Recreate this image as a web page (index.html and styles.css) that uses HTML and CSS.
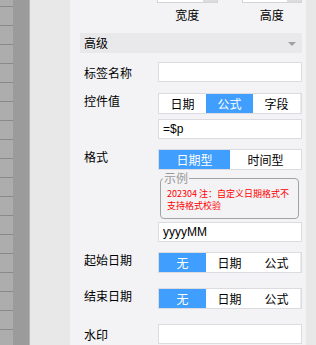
FILE: index.html
```html
<!DOCTYPE html>
<html lang="zh">

<head>
    <meta charset="UTF-8">
    <meta name="viewport" content="width=device-width, initial-scale=1.0">
    <title>属性面板</title>
    <link rel="stylesheet" href="styles.css">
</head>

<body>
    <div class="app">
        <div class="ruler"></div>
        <div class="gutter"></div>
        <div class="canvas"></div>

        <div class="panel">
            <div class="size-row">
                <div class="size-field">
                    <div class="num-box"><span class="spin"></span></div>
                    <span class="size-label">宽度</span>
                </div>
                <div class="size-field">
                    <div class="num-box"><span class="spin"></span></div>
                    <span class="size-label">高度</span>
                </div>
            </div>

            <div class="section-title">高级<i class="caret"></i></div>

            <div class="row">
                <label>标签名称</label>
                <div class="ctrl"><input class="text-input" type="text"></div>
            </div>

            <div class="row row-seg">
                <label>控件值</label>
                <div class="ctrl">
                    <div class="seg">
                        <button>日期</button>
                        <button class="active">公式</button>
                        <button>字段</button>
                    </div>
                    <input class="text-input mt5" type="text" value="=$p">
                </div>
            </div>

            <div class="row row-seg">
                <label>格式</label>
                <div class="ctrl">
                    <div class="seg seg-two">
                        <button class="active">日期型</button>
                        <button>时间型</button>
                    </div>
                    <fieldset class="sample">
                        <legend>示例</legend>
                        <p>202304 注：自定义日期格式不支持格式校验</p>
                    </fieldset>
                    <input class="text-input mt3" type="text" value="yyyyMM">
                </div>
            </div>

            <div class="row row-seg">
                <label>起始日期</label>
                <div class="ctrl">
                    <div class="seg">
                        <button class="active">无</button>
                        <button>日期</button>
                        <button>公式</button>
                    </div>
                </div>
            </div>

            <div class="row row-seg gap15">
                <label>结束日期</label>
                <div class="ctrl">
                    <div class="seg">
                        <button class="active">无</button>
                        <button>日期</button>
                        <button>公式</button>
                    </div>
                </div>
            </div>

            <div class="row gap15">
                <label>水印</label>
                <div class="ctrl"><input class="text-input" type="text"></div>
            </div>
        </div>

        <div class="scrollbar"></div>
    </div>
</body>

</html>
```

FILE: styles.css
```css
body {
    margin: 0;
    font-family: "Noto Sans CJK SC", "Noto Sans", sans-serif;
    font-size: 12px;
    color: #000;
}

.app {
    display: flex;
    height: 345px;
    overflow: hidden;
}

.ruler {
    width: 13px;
    background-color: #adadad;
    background-image: repeating-linear-gradient(to bottom,
            transparent 0, transparent 6px,
            #8a8a8a 6px, #8a8a8a 7px,
            transparent 7px, transparent 19px);
}

.gutter {
    width: 16px;
    background: #9b9b9b;
    border-right: 1px solid #b4b4b4;
}

.canvas {
    width: 40px;
    background: #e8e8e8;
}

.panel {
    width: 236px;
    box-sizing: border-box;
    padding: 0 4px 0 10px;
    background: #f3f3f5;
}

.scrollbar {
    width: 10px;
    background: #e8e8e8;
}

/* size inputs (scrolled half out of view) */
.size-row {
    display: flex;
    gap: 24px;
    padding-left: 77px;
    margin-top: -17px;
}

.size-field {
    display: flex;
    flex-direction: column;
    align-items: center;
    width: 61px;
}

.num-box {
    width: 100%;
    height: 20px;
    box-sizing: border-box;
    display: flex;
    justify-content: flex-end;
    background: #fff;
    border: 1px solid #d4d4d8;
}

.spin {
    width: 14px;
    background: #dcdcdc;
}

.size-label {
    margin-top: 4px;
    line-height: 16px;
}

.section-title {
    position: relative;
    margin-top: 10px;
    height: 20px;
    line-height: 20px;
    padding-left: 4px;
    background: #e9e9eb;
}

.caret {
    position: absolute;
    right: 6px;
    top: 9px;
    border-left: 4px solid transparent;
    border-right: 4px solid transparent;
    border-top: 4px solid #a0a0a0;
}

/* form rows */
.row {
    display: flex;
    align-items: flex-start;
    margin-top: 9px;
}

.row label {
    width: 78px;
    box-sizing: border-box;
    padding-left: 4px;
    line-height: 21px;
}

.row-seg {
    margin-top: 10px;
}

.row-seg label {
    line-height: 15px;
}

.gap15 {
    margin-top: 15px;
}

.ctrl {
    width: 144px;
    display: flex;
    flex-direction: column;
}

.text-input {
    height: 20px;
    box-sizing: border-box;
    margin: 0;
    padding: 0 4px;
    border: 1px solid #dcdce0;
    background: #fff;
    font-family: "Liberation Sans", sans-serif;
    font-size: 12px;
    color: #000;
    outline: none;
}

.mt5 {
    margin-top: 5px;
}

.mt3 {
    margin-top: 3px;
}

.seg {
    display: flex;
    height: 21px;
    box-sizing: border-box;
    border: 1px solid #dcdce0;
    background: #ececee;
}

.seg button {
    width: 47px;
    padding: 0;
    border: none;
    background: #fff;
    font-family: inherit;
    font-size: 12px;
    color: #000;
    cursor: pointer;
}

.seg-two button {
    width: 71px;
}

.seg button.active {
    background: #409eff;
    color: #fff;
}

.sample {
    margin: 2px 3px 0 2px;
    padding: 0 6px 6px;
    border: 1px solid #a3a3a3;
    border-radius: 4px;
    min-width: 0;
}

.sample legend {
    margin-left: -4px;
    padding: 0 1px;
    line-height: 12px;
    font-size: 12px;
    color: #999;
}

.sample p {
    margin: 4px 0 0;
    font-size: 9px;
    line-height: 12px;
    color: #f00;
}
```
